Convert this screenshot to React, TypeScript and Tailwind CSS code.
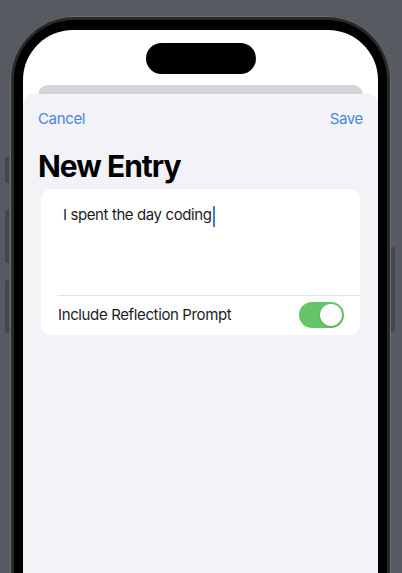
export default function App() {
  return (
    <div
      className="relative w-[402px] h-[573px] overflow-hidden bg-[#565b62]"
      style={{ fontFamily: "Inter, 'Liberation Sans', sans-serif" }}
    >
      {/* side buttons */}
      <div className="absolute left-[5px] top-[157px] w-[4px] h-[26px] rounded-l-[2px] bg-[#43474d]" />
      <div className="absolute left-[5px] top-[210px] w-[4px] h-[53px] rounded-l-[2px] bg-[#43474d]" />
      <div className="absolute left-[5px] top-[280px] w-[4px] h-[53px] rounded-l-[2px] bg-[#43474d]" />
      <div className="absolute left-[391px] top-[247px] w-[4px] h-[85px] rounded-r-[2px] bg-[#43474d]" />

      {/* phone */}
      <div className="ml-[10px] mt-[16px] w-[381px] h-[620px] rounded-[64px] bg-[#2a2a2c] p-[4px] shadow-[inset_0_0_0_1px_#6b6e73]">
        <div className="h-full rounded-[60px] bg-black px-[9px] pt-[10px]">
          <div className="h-full rounded-[50px] bg-white overflow-hidden flex flex-col">
            <div className="flex justify-center pt-[13px]">
              <div className="w-[110px] h-[31px] rounded-full bg-black" />
            </div>

            {/* stacked sheet behind */}
            <div className="mx-[15px] mt-[11px] h-[12px] rounded-t-[10px] bg-[#d4d4d8]" />

            {/* sheet */}
            <div className="-mt-[3px] flex-1 rounded-t-[10px] bg-[#f2f2f7] px-[15px]">
              <div className="flex justify-between items-center pt-[14px] text-[15px] tracking-[-0.35px] text-[#4687e4]">
                <span>Cancel</span>
                <span>Save</span>
              </div>

              <h1 className="mt-[17px] text-[30px] font-bold leading-[36px] tracking-[-1px] text-black">
                New Entry
              </h1>

              <div className="mt-[5px] mx-[3px] rounded-[10px] bg-white">
                <div className="h-[106px] pl-[22px] pt-[15px]">
                  <div className="flex items-center text-[15px] tracking-[-0.4px] text-[#1c1c1e] leading-[20px]">
                    <span>I spent the day coding</span>
                    <span className="ml-[1px] mt-[2px] w-[2px] h-[21px] bg-[#3b7ddd]" />
                  </div>
                </div>
                <div className="ml-[17px] h-px bg-[#e3e3e8]" />
                <div className="flex items-center justify-between pl-[17px] pr-[16px] h-[39px]">
                  <span className="text-[15px] tracking-[-0.37px] text-[#1c1c1e]">Include Reflection Prompt</span>
                  <div className="flex items-center justify-end w-[45px] h-[26px] rounded-full bg-[#65c466] p-[2px]">
                    <div className="w-[22px] h-[22px] rounded-full bg-white shadow-[0_1px_2px_rgba(0,0,0,0.2)]" />
                  </div>
                </div>
              </div>
            </div>
          </div>
        </div>
      </div>
    </div>
  );
}
